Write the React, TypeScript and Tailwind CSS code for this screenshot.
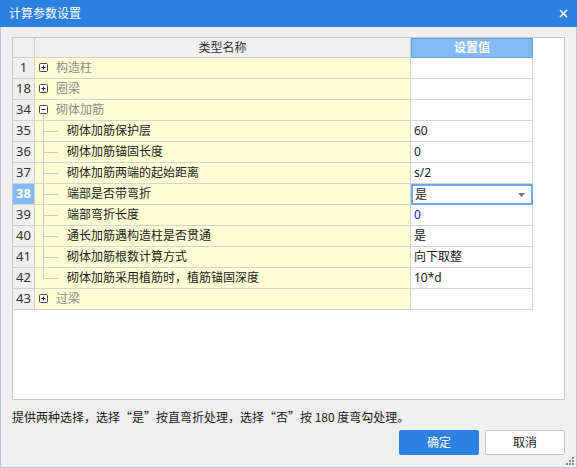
import React from "react";

type Row =
  | { n: number; kind: "group"; open: boolean; label: string; value?: string }
  | { n: number; kind: "child"; last?: boolean; label: string; value: string; blue?: boolean; selected?: boolean };

const rows: Row[] = [
  { n: 1, kind: "group", open: false, label: "构造柱" },
  { n: 18, kind: "group", open: false, label: "圈梁" },
  { n: 34, kind: "group", open: true, label: "砌体加筋" },
  { n: 35, kind: "child", label: "砌体加筋保护层", value: "60" },
  { n: 36, kind: "child", label: "砌体加筋锚固长度", value: "0" },
  { n: 37, kind: "child", label: "砌体加筋两端的起始距离", value: "s/2" },
  { n: 38, kind: "child", label: "端部是否带弯折", value: "是", selected: true },
  { n: 39, kind: "child", label: "端部弯折长度", value: "0", blue: true },
  { n: 40, kind: "child", label: "通长加筋遇构造柱是否贯通", value: "是" },
  { n: 41, kind: "child", label: "砌体加筋根数计算方式", value: "向下取整" },
  { n: 42, kind: "child", label: "砌体加筋采用植筋时，植筋锚固深度", value: "10*d", last: true },
  { n: 43, kind: "group", open: false, label: "过梁" },
];

function GroupIcon({ open }: { open: boolean }) {
  return (
    <svg width="21" height="20" viewBox="0 0 21 20" className="shrink-0">
      <rect x="4.5" y="5.5" width="8" height="8" rx="1" fill="#fff" stroke="#4a4a4a" strokeWidth="1" />
      <line x1="6.5" y1="9.5" x2="10.5" y2="9.5" stroke="#222" strokeWidth="1" />
      {!open && <line x1="8.5" y1="7.5" x2="8.5" y2="11.5" stroke="#222" strokeWidth="1" />}
      {open && <line x1="8.5" y1="14" x2="8.5" y2="20" stroke="#c8c8c8" strokeWidth="1" />}
    </svg>
  );
}

function TreeLine({ last }: { last?: boolean }) {
  return (
    <svg width="32" height="20" viewBox="0 0 32 20" className="shrink-0">
      <line x1="8.5" y1="0" x2="8.5" y2={last ? 10.5 : 20} stroke="#c8c8c8" strokeWidth="1" />
      <line x1="8.5" y1="10.5" x2="23" y2="10.5" stroke="#c8c8c8" strokeWidth="1" />
    </svg>
  );
}

export default function App() {
  return (
    <div className="w-[577px] h-[468px] flex flex-col bg-[#f0f0f0] font-['Noto_Sans','Noto_Sans_CJK_SC',sans-serif] text-[12px] text-[#1a1a1a] overflow-hidden">
      <div className="h-[27px] shrink-0 bg-[#2d80e1] flex items-center justify-between pl-[9px] pr-[9px]">
        <span className="text-white text-[12px] leading-none">计算参数设置</span>
        <svg width="9" height="9" viewBox="0 0 9 9">
          <path d="M1 1L8 8M8 1L1 8" stroke="#fff" strokeWidth="1.5" />
        </svg>
      </div>
      <div className="flex-1 flex flex-col border-x border-b border-[#bcc6d8] relative">
        <div className="ml-[11px] mt-[10px] w-[553px] h-[363px] border border-[#c6c6c6] bg-white flex flex-col">
          <div className="flex h-[20px] shrink-0">
            <div className="w-[22px] shrink-0 bg-[#f0f0f0] border-r border-b border-[#d0d0d0]" />
            <div className="w-[376px] shrink-0 bg-[#f0f0f0] border-r border-b border-[#d0d0d0] flex items-center justify-center text-[#333]">
              类型名称
            </div>
            <div className="w-[122px] shrink-0 bg-[#82bbf7] border border-[#68a3e9] flex items-center justify-center text-white font-bold text-[12px]">
              设置值
            </div>
            <div className="flex-1" />
          </div>
          {rows.map((r) => (
            <div key={r.n} className="flex h-[21px] shrink-0">
              <div
                className={
                  r.kind === "child" && r.selected
                    ? "w-[22px] shrink-0 bg-[#82bbf7] border-r border-b border-[#d0d0d0] flex items-center justify-center text-white font-bold text-[13px]"
                    : "w-[22px] shrink-0 bg-[#f0f0f0] border-r border-b border-[#d0d0d0] flex items-center justify-center text-[#333] text-[13px]"
                }
              >
                {r.n}
              </div>
              <div className="w-[376px] shrink-0 bg-[#ffffd6] border-r border-b border-[#d4d4d4] flex items-center overflow-hidden whitespace-nowrap">
                {r.kind === "group" ? (
                  <>
                    <GroupIcon open={r.open} />
                    <span className="text-[#8a8a8a]">{r.label}</span>
                  </>
                ) : (
                  <>
                    <TreeLine last={r.last} />
                    <span>{r.label}</span>
                  </>
                )}
              </div>
              {r.kind === "child" && r.selected ? (
                <div className="w-[122px] shrink-0 border-2 border-[#6ea9ea] flex items-center justify-between pl-[2px] pr-[6px]">
                  <span>{r.value}</span>
                  <svg width="7" height="4" viewBox="0 0 7 4">
                    <path d="M0 0H7L3.5 4Z" fill="#777" />
                  </svg>
                </div>
              ) : (
                <div
                  className={
                    r.kind === "child" && r.blue
                      ? "w-[122px] shrink-0 border-r border-b border-[#d4d4d4] flex items-center pl-[3px] text-[#2020ff]"
                      : "w-[122px] shrink-0 border-r border-b border-[#d4d4d4] flex items-center pl-[3px]"
                  }
                >
                  {r.kind === "child" ? r.value : ""}
                </div>
              )}
              <div className="flex-1" />
            </div>
          ))}
        </div>
        <div className="ml-[11px] mt-[9px] leading-[16px] text-[12px] font-['Noto_Sans_CJK_SC',sans-serif]">
          提供两种选择，选择“是”按直弯折处理，选择“否”按 180 度弯勾处理。
        </div>
        <div className="flex justify-end gap-[6px] mr-[11px] mt-[5px]">
          <button className="w-[80px] h-[25px] rounded-[2px] bg-[#2d80e1] text-white text-[12px]">确定</button>
          <button className="w-[80px] h-[25px] rounded-[2px] bg-white border border-[#c8c8c8] text-[12px]">取消</button>
        </div>
        <svg width="10" height="10" viewBox="0 0 10 10" className="absolute right-[1px] bottom-[1px]">
          <rect x="7" y="1" width="2" height="2" fill="#8a8a8a" />
          <rect x="4" y="4" width="2" height="2" fill="#8a8a8a" />
          <rect x="7" y="4" width="2" height="2" fill="#8a8a8a" />
          <rect x="1" y="7" width="2" height="2" fill="#8a8a8a" />
          <rect x="4" y="7" width="2" height="2" fill="#8a8a8a" />
          <rect x="7" y="7" width="2" height="2" fill="#8a8a8a" />
        </svg>
      </div>
    </div>
  );
}
